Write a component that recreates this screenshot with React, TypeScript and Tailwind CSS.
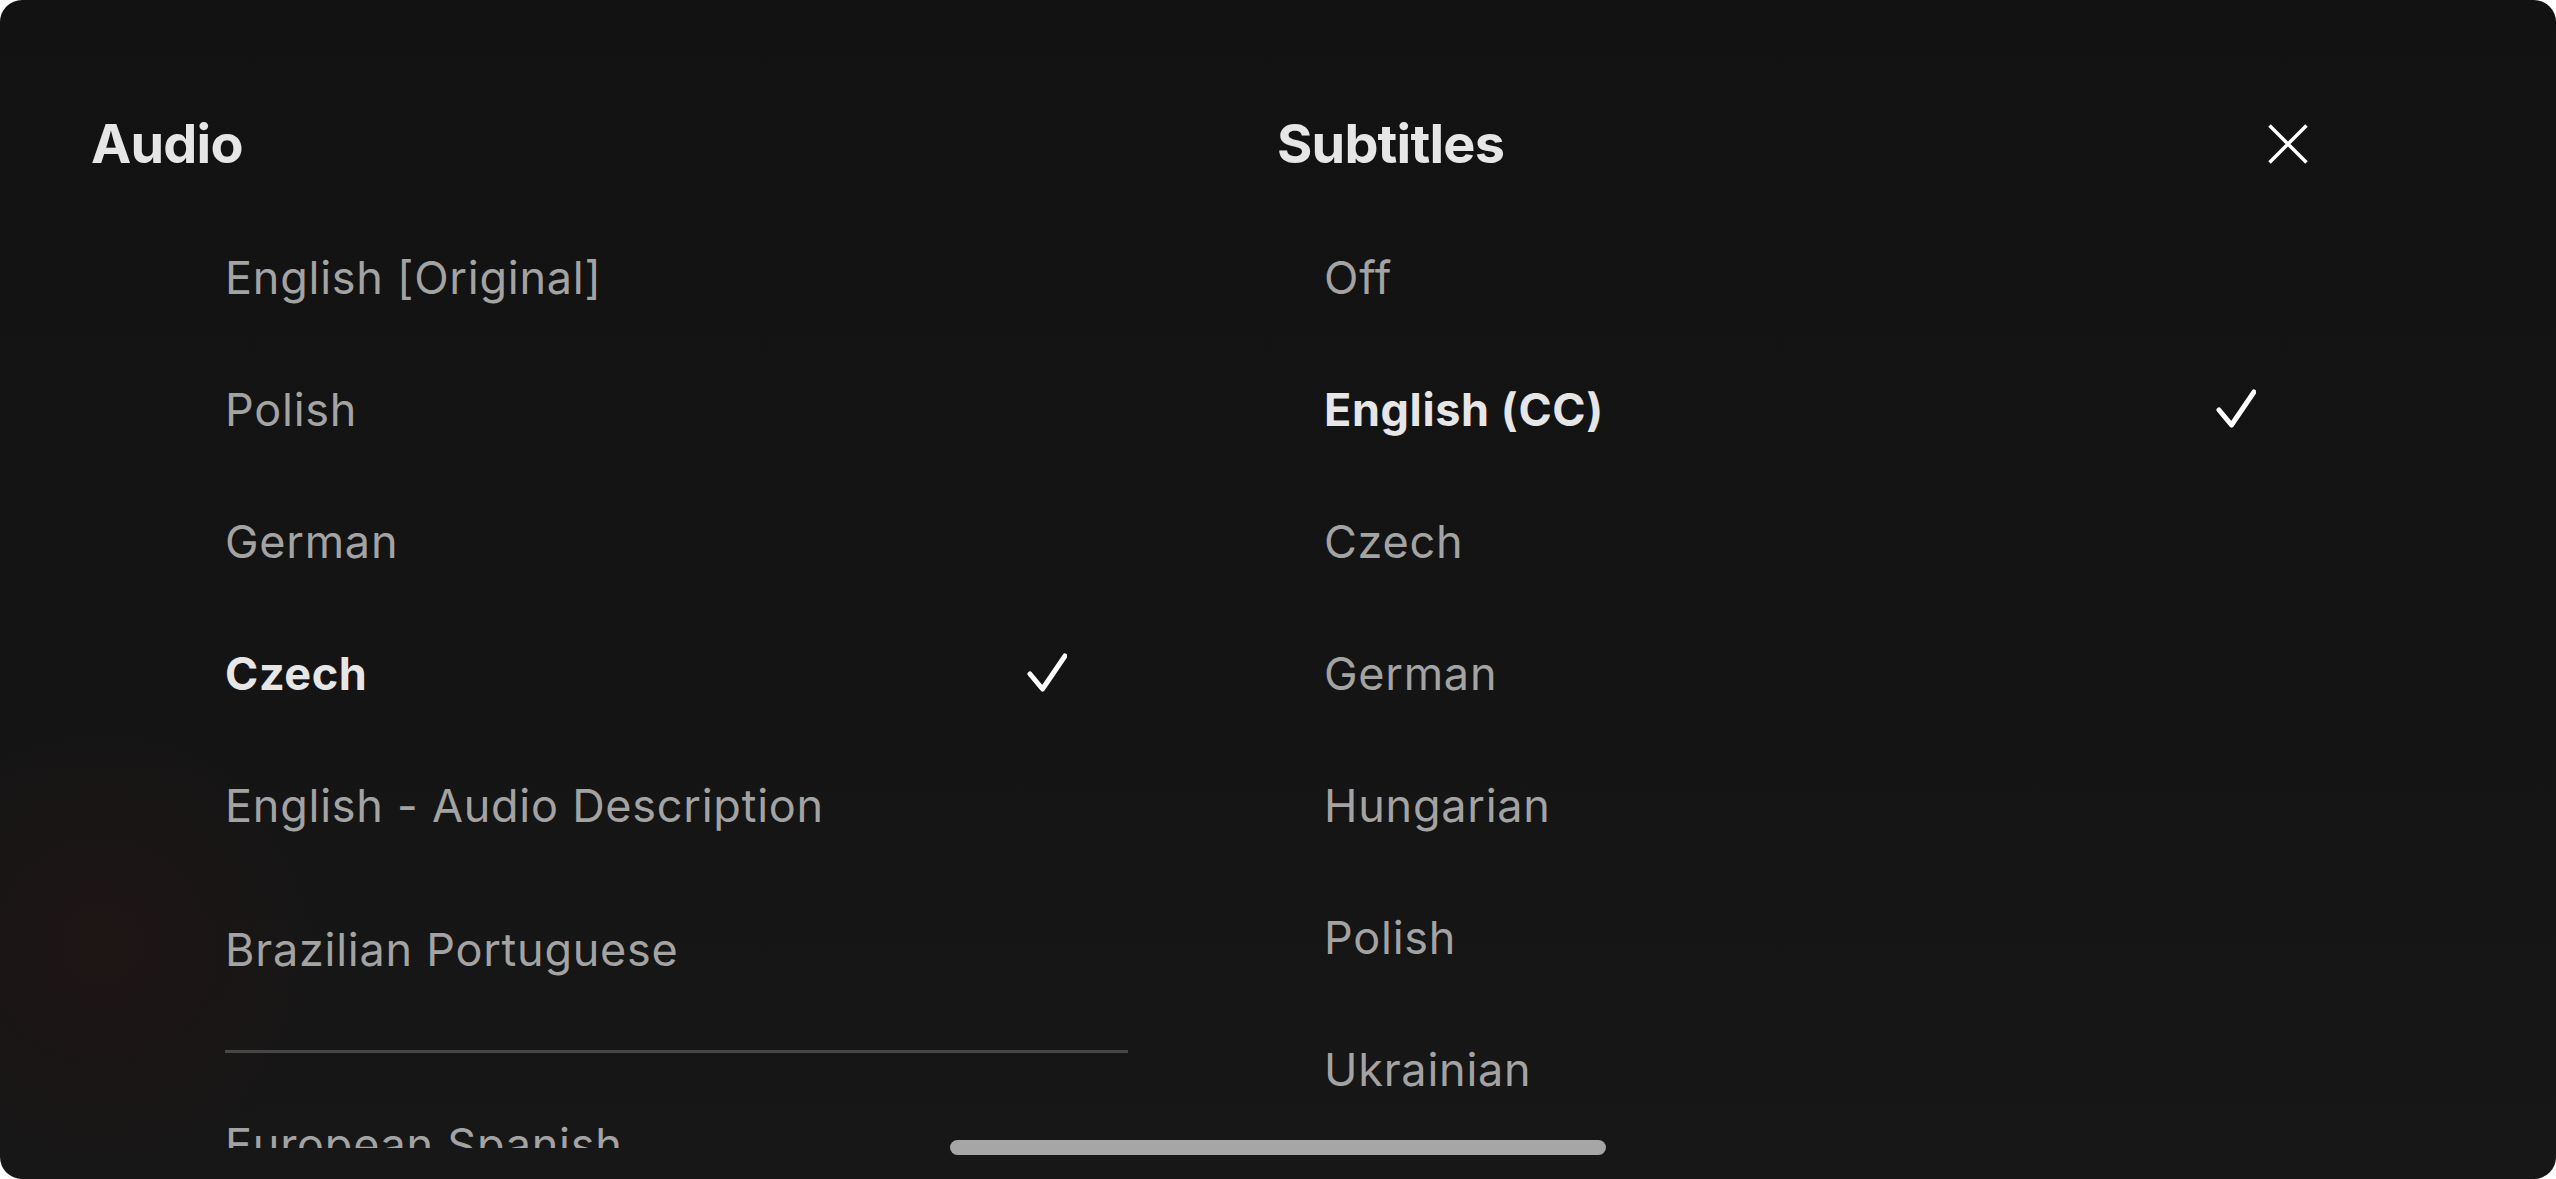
import React from "react";

const audio = [
  { label: "English [Original]" },
  { label: "Polish" },
  { label: "German" },
  { label: "Czech", selected: true },
  { label: "English - Audio Description" },
];

const subs = [
  { label: "Off" },
  { label: "English (CC)", selected: true },
  { label: "Czech" },
  { label: "German" },
  { label: "Hungarian" },
  { label: "Polish" },
  { label: "Ukrainian" },
];

function Check() {
  return (
    <svg width="40" height="40" viewBox="0 0 40 40" fill="none">
      <path
        d="M3 21 L15.5 36 L38 3"
        stroke="#ffffff"
        strokeWidth="5"
        strokeLinecap="round"
        strokeLinejoin="round"
      />
    </svg>
  );
}

function CloseX() {
  return (
    <svg width="40" height="40" viewBox="0 0 40 40" fill="none">
      <path d="M1.5 1.5 L38.5 38.5 M38.5 1.5 L1.5 38.5" stroke="#ffffff" strokeWidth="3.5" strokeLinecap="butt" />
    </svg>
  );
}

function Row({ label, selected }: { label: string; selected?: boolean }) {
  return (
    <div className="flex h-[132px] items-center justify-between">
      <span
        className={
          selected
            ? "text-[45px] font-bold tracking-[0.6px] text-[#e6e6e6] leading-none"
            : "text-[45px] font-normal tracking-[0.75px] text-[#a3a3a3] leading-none"
        }
      >
        {label}
      </span>
      {selected ? <Check /> : null}
    </div>
  );
}

export default function App() {
  return (
    <div className="w-[2556px] h-[1179px] bg-white" style={{ fontFamily: "Inter, 'Noto Sans', sans-serif" }}>
      <div className="relative h-full w-full overflow-hidden rounded-[22px] bg-[linear-gradient(180deg,#121212_0%,#141414_55%,#171717_100%)]">
        <div className="pointer-events-none absolute inset-0 bg-[radial-gradient(circle_at_4%_80%,#1f1515_0,rgba(20,20,20,0)_9%)]" />
        <div className="relative flex h-full pl-[91px]">
          {/* Audio column */}
          <div className="flex w-[1186px] flex-col">
            <div className="mt-[104px] flex h-[80px] items-center">
              <h2 className="text-[54px] font-bold leading-none tracking-[-0.8px] text-[#e6e6e6]">Audio</h2>
            </div>
            <div className="mt-[27px] h-[937px] overflow-hidden pl-[134px]">
              <div className="w-[903px]">
                <div className="pr-[61px]">
                  {audio.map((a) => (
                    <Row key={a.label} label={a.label} selected={a.selected} />
                  ))}
                  <div className="mt-[12px]">
                    <Row label="Brazilian Portuguese" />
                  </div>
                </div>
                <div className="mt-[35px] h-[3px] w-full bg-[#474747]" />
                <div className="mt-[25px] pr-[61px]">
                  <Row label="European Spanish" />
                </div>
              </div>
            </div>
          </div>
          {/* Subtitles column */}
          <div className="flex flex-1 flex-col pr-[248px]">
            <div className="mt-[104px] flex h-[80px] items-center justify-between">
              <h2 className="text-[54px] font-bold leading-none tracking-[-0.8px] text-[#e6e6e6]">Subtitles</h2>
              <CloseX />
            </div>
            <div className="mt-[27px] h-[937px] overflow-hidden pl-[47px] pr-[52px]">
              {subs.map((s) => (
                <Row key={s.label} label={s.label} selected={s.selected} />
              ))}
            </div>
          </div>
        </div>
        <div className="absolute bottom-[24px] left-1/2 h-[15px] w-[656px] -translate-x-1/2 rounded-full bg-[#a6a6a6]" />
      </div>
    </div>
  );
}
